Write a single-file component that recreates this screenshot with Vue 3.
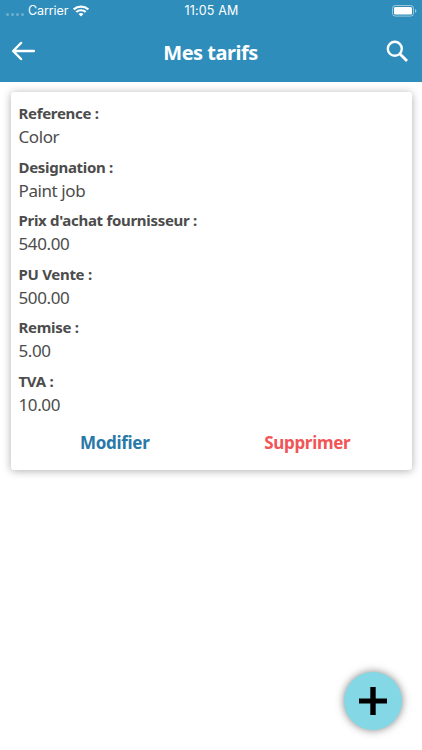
<template>
  <div class="screen">
    <header class="header">
      <div class="statusBar">
        <div class="carrier">
          <span class="dots"><i v-for="n in 4" :key="n"></i></span>
          <span class="carrierName">Carrier</span>
          <svg class="wifi" width="16" height="12" viewBox="0 0 15 12" preserveAspectRatio="none" fill="none" stroke="#fff" stroke-width="2.1">
            <path d="M0.7 4.4a9.7 9.7 0 0 1 13.6 0" />
            <path d="M3.1 7a6.3 6.3 0 0 1 8.8 0" />
            <path d="M7.5 11.4L5.2 9.1a3.3 3.3 0 0 1 4.6 0z" fill="#fff" stroke="none" />
          </svg>
        </div>
        <span class="time">11:05 AM</span>
        <div class="battery">
          <svg width="25" height="12" viewBox="0 0 25 12">
            <rect x="0.5" y="0.5" width="21" height="10.6" rx="2.8" fill="none" stroke="#fff" stroke-opacity="0.5" />
            <rect x="2" y="2" width="18" height="7.6" rx="1.4" fill="#fff" />
            <path d="M23 4v4q1.4-.6 1.4-2T23 4z" fill="#fff" fill-opacity="0.5" />
          </svg>
        </div>
      </div>
      <div class="navBar">
        <button class="iconButton" aria-label="Retour">
          <svg width="24" height="20" viewBox="0 0 24 20" fill="none" stroke="#fff" stroke-width="2.5" stroke-linecap="round" stroke-linejoin="round">
            <path d="M10 2L2.2 10l7.8 8M2.5 10h20.3" />
          </svg>
        </button>
        <h1>Mes tarifs</h1>
        <button class="iconButton" aria-label="Rechercher">
          <svg width="23" height="23" viewBox="0 0 23 23" fill="none" stroke="#fff">
            <circle cx="8.8" cy="8.8" r="7" stroke-width="2.4" />
            <path d="M14 14l7 7" stroke-width="2.9" />
          </svg>
        </button>
      </div>
    </header>

    <main class="card">
      <dl>
        <div v-for="field in fields" :key="field.label" class="field">
          <dt>{{ field.label }} :</dt>
          <dd>{{ field.value }}</dd>
        </div>
      </dl>
      <div class="actions">
        <button class="edit">Modifier</button>
        <button class="delete">Supprimer</button>
      </div>
    </main>

    <button class="addButton" aria-label="Ajouter">
      <svg width="30" height="30" viewBox="0 0 30 30">
        <path d="M12.3 1h5.4v11.4H29v5.2H17.7V29h-5.4V17.6H1v-5.2h11.3z" />
      </svg>
    </button>
  </div>
</template>

<script setup>
import { ref } from "vue";

const fields = ref([
  { label: "Reference", value: "Color" },
  { label: "Designation", value: "Paint job" },
  { label: "Prix d'achat fournisseur", value: "540.00" },
  { label: "PU Vente", value: "500.00" },
  { label: "Remise", value: "5.00" },
  { label: "TVA", value: "10.00" },
])
</script>

<style>
body {
  margin: 0;
  background-color: #fff;
}
</style>

<style scoped>
.screen {
  position: relative;
  height: 750px;
  overflow: hidden;
  background-color: #fff;
  font-family: "Noto Sans", "Open Sans", sans-serif;
}

button {
  padding: 0;
  border: none;
  background: none;
  font-family: inherit;
}

svg {
  display: block;
}

.header {
  height: 82px;
  box-sizing: border-box;
  background-color: #2e8dba;
  color: #fff;
}

.statusBar {
  display: grid;
  grid-template-columns: 1fr auto 1fr;
  align-items: center;
  height: 21px;
  padding: 0 5px 0 6px;
  font-family: Inter, sans-serif;
  font-size: 12.5px;
}

.time {
  letter-spacing: 0.15px;
}

.carrier {
  display: flex;
  align-items: center;
}

.dots {
  display: flex;
  gap: 2px;
  margin: 7px 4px 0 0;
}

.dots i {
  width: 3px;
  height: 3px;
  border-radius: 50%;
  background-color: rgba(255, 255, 255, 0.3);
}

.carrierName {
  letter-spacing: -0.1px;
}

.wifi {
  margin-left: 5px;
}

.battery {
  justify-self: end;
}

.navBar {
  display: flex;
  align-items: center;
  justify-content: space-between;
  height: 60px;
  padding: 0 13px 0 11px;
}

h1 {
  margin: 3px 0 0;
  font-size: 20px;
  line-height: 26px;
  font-weight: 700;
  letter-spacing: -0.5px;
}

.card {
  height: 378px;
  box-sizing: border-box;
  margin: 10px 10.5px 0;
  padding: 9px 8px 0;
  border-radius: 3px;
  background-color: #fff;
  box-shadow: 0 1px 9px rgba(0, 0, 0, 0.32);
  color: #4c4c4c;
}

dl,
dd {
  margin: 0;
}

.field {
  height: 53.6px;
}

dt {
  font-size: 15px;
  line-height: 25px;
  font-weight: 700;
  letter-spacing: -0.3px;
}

dd {
  font-size: 17px;
  line-height: 22px;
  letter-spacing: -0.4px;
}

.actions {
  display: flex;
  margin-top: 8px;
}

.actions button {
  flex: 1;
  font-size: 17px;
  line-height: 24px;
  font-weight: 700;
  letter-spacing: -0.3px;
}

.actions .edit {
  color: #2878a8;
}

.actions .delete {
  color: #f05558;
}

.addButton {
  position: absolute;
  right: 20px;
  bottom: 20px;
  display: flex;
  align-items: center;
  justify-content: center;
  width: 58px;
  height: 58px;
  border-radius: 50%;
  background-color: #84d8e6;
  box-shadow: 0 0 8px rgba(0, 0, 0, 0.5);
}
</style>
